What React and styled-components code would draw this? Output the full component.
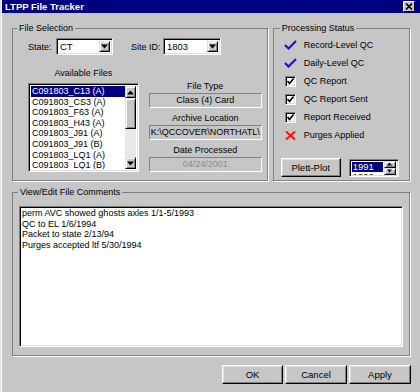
import React from "react";
import styled, { createGlobalStyle } from "styled-components";

const GlobalStyle = createGlobalStyle`
  html, body {
    margin: 0;
    padding: 0;
    background: #c6c6c6;
  }
  body {
    font-family: "Liberation Sans", Arial, sans-serif;
    font-size: 9px;
    color: #000;
  }
`;

const Window = styled.div`
  width: 420px;
  height: 392px;
  box-sizing: border-box;
  padding-left: 2px;
  background: #c6c6c6;
  box-shadow: inset 1px 0 0 #dedede, inset 2px 0 0 #ffffff;
  overflow: hidden;
`;

const TitleBar = styled.div`
  height: 13px;
  background: #000080;
  display: flex;
  align-items: center;
  justify-content: space-between;
  padding: 0 5px 0 3px;
  color: #fff;
  font-weight: bold;
  font-size: 9.5px;
`;

const CloseButton = styled.div`
  width: 12px;
  height: 11px;
  box-sizing: border-box;
  background: #c6c6c6;
  border: 1px solid;
  border-color: #fff #000 #000 #fff;
  display: flex;
  align-items: center;
  justify-content: center;
`;

const Content = styled.div`
  padding: 0 10px;
`;

const TopRow = styled.div`
  display: flex;
  gap: 5px;
  margin-top: 9px;
`;

const Group = styled.fieldset`
  margin: 0;
  min-width: 0;
  width: ${p => p.$w}px;
  box-sizing: border-box;
  height: ${p => p.$h}px;
  padding: ${p => p.$pad};
  border: 1px solid #808080;
  box-shadow: 1px 1px 0 #fff;
`;

const Legend = styled.legend`
  padding: 0 2px;
  margin-left: ${p => p.$off}px;
  line-height: 12px;
  font-size: 9px;
`;

const StateRow = styled.div`
  display: flex;
  align-items: center;
  height: 17px;
  gap: 18px;
`;

const LabeledCombo = styled.div`
  display: flex;
  align-items: center;
`;

const Label = styled.span`
  width: ${p => p.$w}px;
  white-space: nowrap;
`;

const Sunken = styled.div`
  box-sizing: border-box;
  border: 1px solid;
  border-color: #808080 #fff #fff #808080;
  box-shadow: inset 1px 1px 0 #000, inset -1px -1px 0 #dedede;
  background: #fff;
`;

const Combo = styled(Sunken)`
  width: ${p => p.$w}px;
  height: 17px;
  display: flex;
  align-items: center;
  padding: 2px;
  gap: 2px;
  font-size: 9.5px;
`;

const ComboText = styled.span`
  flex: 1;
  padding-left: 1px;
`;

const ArrowButton = styled.div`
  box-sizing: border-box;
  width: ${p => p.$w || 11}px;
  height: ${p => p.$h || 11}px;
  background: #c6c6c6;
  border: 1px solid;
  border-color: #dedede #000 #000 #dedede;
  box-shadow: inset 1px 1px 0 #fff, inset -1px -1px 0 #808080;
  display: flex;
  align-items: center;
  justify-content: center;
`;

const FilesRow = styled.div`
  display: flex;
  gap: 10px;
  margin-top: 12px;
`;

const FilesColumn = styled.div`
  width: 111px;
  display: flex;
  flex-direction: column;
`;

const Caption = styled.div`
  text-align: center;
  line-height: 12px;
  height: 12px;
`;

const ListBox = styled(Sunken)`
  margin-top: 4px;
  height: 89px;
  display: flex;
  padding: 2px;
`;

const ListItems = styled.div`
  flex: 1;
  overflow: hidden;
`;

const ListItem = styled.div`
  height: 10.6px;
  line-height: 10.6px;
  padding-left: 1px;
  white-space: nowrap;
  background: ${p => (p.$sel ? "#000080" : "transparent")};
  color: ${p => (p.$sel ? "#fff" : "#000")};
`;

const ScrollBar = styled.div`
  width: 11px;
  display: flex;
  flex-direction: column;
  background: #e8e8e8;
`;

const Thumb = styled.div`
  height: 31px;
  box-sizing: border-box;
  background: #c6c6c6;
  border: 1px solid;
  border-color: #dedede #000 #000 #dedede;
  box-shadow: inset 1px 1px 0 #fff, inset -1px -1px 0 #808080;
`;

const Track = styled.div`
  flex: 1;
`;

const InfoColumn = styled.div`
  width: 113px;
  padding-top: 13px;
  display: flex;
  flex-direction: column;
  gap: 4px;
`;

const InfoBlock = styled.div`
  display: flex;
  flex-direction: column;
  gap: 1px;
`;

const Display = styled.div`
  box-sizing: border-box;
  height: 15px;
  line-height: 13px;
  border: 1px solid;
  border-color: #808080 #fff #fff #808080;
  text-align: ${p => (p.$left ? "left" : "center")};
  color: ${p => (p.$dim ? "#8a8a8a" : "#000")};
  white-space: nowrap;
  overflow: hidden;
  padding: 0 1px;
`;

const StatusList = styled.div`
  display: flex;
  flex-direction: column;
`;

const StatusItem = styled.div`
  height: 18px;
  display: flex;
  align-items: center;
  gap: 7px;
`;

const IconSlot = styled.div`
  width: 13px;
  display: flex;
  justify-content: center;
`;

const CheckBox = styled(Sunken)`
  width: 11px;
  height: 11px;
  display: flex;
  align-items: center;
  justify-content: center;
`;

const PlotRow = styled.div`
  display: flex;
  align-items: center;
  gap: 8px;
  margin-top: 14px;
  margin-left: -3px;
`;

const Button = styled.button`
  box-sizing: border-box;
  width: ${p => p.$w}px;
  height: 19px;
  padding: 0;
  font-family: inherit;
  font-size: 9.5px;
  color: #000;
  background: #c6c6c6;
  border: 1px solid;
  border-color: #fff #000 #000 #fff;
  box-shadow: inset -1px -1px 0 #808080, inset 1px 1px 0 #dedede;
`;

const Spin = styled(Sunken)`
  width: 50px;
  height: 18px;
  display: flex;
  padding: 1px 2px 1px 2px;
  gap: 1px;
`;

const SpinList = styled.div`
  flex: 1;
  overflow: hidden;
  padding-top: 1px;
`;

const SpinItem = styled.div`
  height: 10px;
  line-height: 10px;
  padding-left: 1px;
  font-size: 9.5px;
  background: ${p => (p.$sel ? "#000080" : "transparent")};
  color: ${p => (p.$sel ? "#fff" : "#000")};
`;

const SpinButtons = styled.div`
  display: flex;
  flex-direction: column;
  justify-content: center;
`;

const CommentBox = styled.textarea`
  display: block;
  width: 100%;
  height: 141px;
  box-sizing: border-box;
  resize: none;
  border: 1px solid;
  border-color: #808080 #fff #fff #808080;
  box-shadow: inset 1px 1px 0 #000, inset -1px -1px 0 #dedede;
  padding: 1px 2px;
  margin: 0;
  font-family: inherit;
  font-size: 9px;
  line-height: 10.6px;
  color: #000;
  outline: none;
  overflow: hidden;
`;

const Footer = styled.div`
  display: flex;
  justify-content: flex-end;
  gap: 2px;
  margin-top: 9px;
  margin-right: -1px;
`;

const files = [
  "C091803_C13 (A)",
  "C091803_CS3 (A)",
  "C091803_F63 (A)",
  "C091803_H43 (A)",
  "C091803_J91 (A)",
  "C091803_J91 (B)",
  "C091803_LQ1 (A)",
  "C091803_LQ1 (B)",
  "C091803_R11 (A)",
];

const statuses = [
  { text: "Record-Level QC", kind: "tick" },
  { text: "Daily-Level QC", kind: "tick" },
  { text: "QC Report", kind: "box" },
  { text: "QC Report Sent", kind: "box" },
  { text: "Report Received", kind: "box" },
  { text: "Purges Applied", kind: "cross" },
];

const comments =
  "perm AVC showed ghosts axles 1/1-5/1993\nQC to EL 1/6/1994\nPacket to state 2/13/94\nPurges accepted ltf 5/30/1994";

function Arrow({ up, size = 7 }) {
  return (
    <svg width={size} height={Math.ceil(size / 2) + 1} viewBox="0 0 7 4">
      <path d={up ? "M3.5 0 L7 4 L0 4 Z" : "M0 0 L7 0 L3.5 4 Z"} fill="#000" />
    </svg>
  );
}

function StatusIcon({ kind }) {
  if (kind === "tick") {
    return (
      <svg width="13" height="10" viewBox="0 0 13 10">
        <path d="M1 5 L4.5 8.5 L12 1" stroke="#1010ff" strokeWidth="2.2" fill="none" />
      </svg>
    );
  }
  if (kind === "cross") {
    return (
      <svg width="11" height="9" viewBox="0 0 11 9">
        <path d="M1 0.5 L10 8.5 M10 0.5 L1 8.5" stroke="#ff1010" strokeWidth="2" fill="none" />
      </svg>
    );
  }
  return (
    <CheckBox>
      <svg width="7" height="7" viewBox="0 0 7 7">
        <path d="M0.5 3 L2.5 5.5 L6.5 0.5" stroke="#000" strokeWidth="1.6" fill="none" />
      </svg>
    </CheckBox>
  );
}

export default function App() {
  return (
    <>
      <GlobalStyle />
      <Window>
        <TitleBar>
          <span>LTPP File Tracker</span>
          <CloseButton>
            <svg width="8" height="7" viewBox="0 0 8 7">
              <path d="M1 0.5 L7 6.5 M7 0.5 L1 6.5" stroke="#000" strokeWidth="1.6" />
            </svg>
          </CloseButton>
        </TitleBar>
        <Content>
          <TopRow>
            <Group $w={257} $h={159} $pad="4px 5px 0 15px">
              <Legend $off={-11}>File Selection</Legend>
              <StateRow>
                <LabeledCombo>
                  <Label $w={28}>State:</Label>
                  <Combo $w={57}>
                    <ComboText>CT</ComboText>
                    <ArrowButton>
                      <Arrow />
                    </ArrowButton>
                  </Combo>
                </LabeledCombo>
                <LabeledCombo>
                  <Label $w={32}>Site ID:</Label>
                  <Combo $w={58}>
                    <ComboText>1803</ComboText>
                    <ArrowButton>
                      <Arrow />
                    </ArrowButton>
                  </Combo>
                </LabeledCombo>
              </StateRow>
              <FilesRow>
                <FilesColumn>
                  <Caption>Available Files</Caption>
                  <ListBox>
                    <ListItems>
                      {files.map((f, i) => (
                        <ListItem key={f} $sel={i === 0}>
                          {f}
                        </ListItem>
                      ))}
                    </ListItems>
                    <ScrollBar>
                      <ArrowButton $h={12}>
                        <Arrow up />
                      </ArrowButton>
                      <Thumb />
                      <Track />
                      <ArrowButton $h={12}>
                        <Arrow />
                      </ArrowButton>
                    </ScrollBar>
                  </ListBox>
                </FilesColumn>
                <InfoColumn>
                  <InfoBlock>
                    <Caption>File Type</Caption>
                    <Display>Class (4) Card</Display>
                  </InfoBlock>
                  <InfoBlock>
                    <Caption>Archive Location</Caption>
                    <Display $left>K:\QCCOVER\NORTHATL\</Display>
                  </InfoBlock>
                  <InfoBlock>
                    <Caption>Date Processed</Caption>
                    <Display $dim>04/24/2001</Display>
                  </InfoBlock>
                </InfoColumn>
              </FilesRow>
            </Group>
            <Group $w={138} $h={159} $pad="2px 5px 0 10px">
              <Legend $off={-4}>Processing Status</Legend>
              <StatusList>
                {statuses.map(s => (
                  <StatusItem key={s.text}>
                    <IconSlot>
                      <StatusIcon kind={s.kind} />
                    </IconSlot>
                    <span>{s.text}</span>
                  </StatusItem>
                ))}
              </StatusList>
              <PlotRow>
                <Button $w={60}>Plett-Plot</Button>
                <Spin>
                  <SpinList>
                    <SpinItem $sel>1991</SpinItem>
                    <SpinItem>1992</SpinItem>
                  </SpinList>
                  <SpinButtons>
                    <ArrowButton $w={12} $h={7}>
                      <Arrow up size={5} />
                    </ArrowButton>
                    <ArrowButton $w={12} $h={7}>
                      <Arrow size={5} />
                    </ArrowButton>
                  </SpinButtons>
                </Spin>
              </PlotRow>
            </Group>
          </TopRow>
          <Group $w={398} $h={170} $pad="8px 6px 7px 6px" style={{ marginTop: 5 }}>
            <Legend $off={-1}>View/Edit File Comments</Legend>
            <CommentBox defaultValue={comments} spellCheck={false} />
          </Group>
          <Footer>
            <Button $w={61}>OK</Button>
            <Button $w={62}>Cancel</Button>
            <Button $w={62}>Apply</Button>
          </Footer>
        </Content>
      </Window>
    </>
  );
}
